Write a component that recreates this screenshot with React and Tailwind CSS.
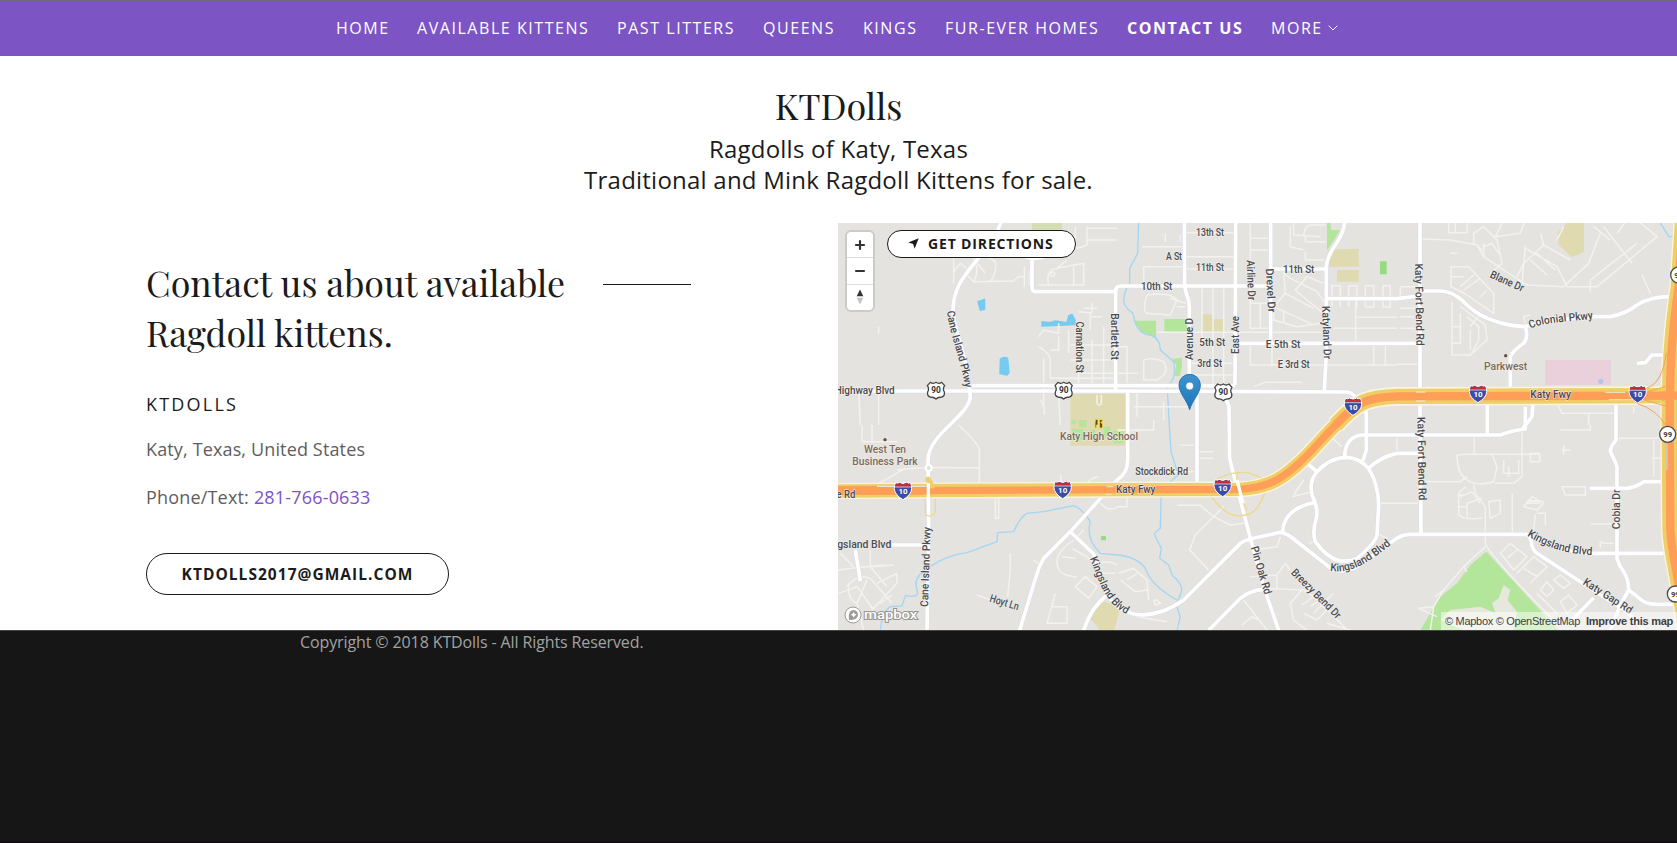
import React from "react";

const NAV = [
  ["HOME", "w-[81px]"],
  ["AVAILABLE KITTENS", "w-[200px]"],
  ["PAST LITTERS", "w-[146px]"],
  ["QUEENS", "w-[100px]"],
  ["KINGS", "w-[82px]"],
  ["FUR-EVER HOMES", "w-[182px]"],
  ["CONTACT US", "w-[144px] font-bold"],
];

/* Map units are thirds of a pixel. */
const MAJOR = [
  "M495 0 L470 60 L420 120 C370 180 350 210 348 270 C350 330 385 400 393 470 L400 530 C395 590 275 640 273 720 L275 920 L270 1231",
  "M405 497 H1195", "M0 513 H835 L1530 516 Q1555 520 1568 550 Q1588 560 1588 590 V690 L1578 722",
  "M1568 550 L1588 580",
  "M585 110 V205 Q586 215 598 215 H835 Q836 198 850 198 H1290", "M836 205 V512",
  "M1042 0 L1043 190 Q1043 210 1053 235 Q1058 250 1057 280 V490", "M1080 516 V790",
  "M1196 0 L1194 495", "M1301 0 V370", "M1301 147 H1470", "M1523 0 Q1523 35 1495 75 Q1470 110 1468 140 V400 L1462 512",
  "M1200 370 H1680 H1740", "M1472 236 H1680 L1745 228",
  "M872 516 V720 Q872 760 840 780 L700 935 L620 1015 Q605 1040 597 1070 L548 1231",
  "M700 935 L770 1002 Q785 1050 810 1125 Q840 1170 890 1182 Q960 1195 1040 1140 L1210 970 Q1225 960 1240 957 L1330 937 Q1350 940 1370 957 L1475 1040 Q1510 1065 1560 1040 L1680 955 Q1695 944 1720 943 H2065 Q2080 945 2083 965 Q2085 990 2100 1000 L2230 1085 L2370 1175 L2420 1231",
  "M810 1125 Q760 1165 740 1231",
  "M2065 943 L2130 965 Q2200 1000 2260 1000 H2480",
  "M1160 516 L1176 560 L1178 715 L1185 745 L1240 955 L1285 1115 L1325 1231",
  "M1115 1231 L1210 1135 Q1240 1110 1280 1108",
  "M1440 755 Q1480 712 1530 712 Q1570 715 1595 745 Q1625 795 1625 855 L1620 945 Q1615 970 1560 1015 Q1540 1025 1510 1023 Q1470 1015 1435 965 Q1425 935 1438 895 Q1445 865 1425 825 Q1415 785 1440 755",
  "M1412 732 L1440 755", "M1435 847 Q1340 865 1337 937", "M1523 712 Q1523 655 1570 645 H1990 Q2030 630 2065 627 V560",
  "M1595 745 Q1630 710 1680 700 H1745", "M1951 550 V643", "M2088 550 L2085 590 L2058 625",
  "M2337 555 V660 Q2320 680 2320 695 Q2335 725 2340 740 V1015 Q2345 1035 2360 1055 Q2375 1080 2375 1110 L2350 1155 L2320 1231",
  "M2375 1110 L2420 1145 Q2435 1153 2460 1153 H2520", "M2258 805 H2370 Q2400 800 2420 785 H2480",
  "M1749 0 V600 L1752 940", "M1750 213 H1810 Q1845 213 1880 245 Q1940 310 2060 320 L2160 300 L2270 290 H2320 Q2370 280 2400 255 Q2440 230 2500 230",
  "M2065 320 Q2075 350 2060 370 Q2025 395 2020 410 V500", "M2400 430 L2425 428 L2445 405 H2490",
  "M165 975 H265", "M55 990 L70 1083", "M2270 1133 L2200 1205",
];

const MINOR = [
  /* north-west */
  "M350 80 V190 M350 155 L370 130 L395 150 M385 160 L410 185 Q430 150 410 120 Q440 100 475 125 Q480 160 460 185 M410 115 L445 160 M410 185 L530 183 Q545 165 560 170 M562 140 V200 M577 150 V195 M635 195 Q625 150 660 145 L740 130 V195 H605 M655 160 Q645 150 640 165 Q650 175 655 160 M660 145 L690 120 M710 140 V195",
  "M715 20 V80 H690 M750 20 V75 Q720 90 700 80 M750 25 H840 M750 60 H840",
  "M725 275 L760 278 V330 M765 250 V280 M780 265 H740 M760 290 H795 M605 350 L620 330 L665 340 V310 M605 380 Q640 400 640 420 V475 H835 M620 415 V560 M610 540 Q625 560 622 585 M665 350 V390 H640 M695 330 V400 M725 410 V490 M765 360 V490 M800 320 V490 M700 375 H835 M700 420 H835 M730 460 H835",
  "M65 520 L70 615 M125 520 V615 M125 320 V340 M665 530 L670 615 M780 525 V550 Q787 560 793 550 V525",
  "M75 615 V665 H180 M105 665 V615 M365 615 Q410 655 427 685 V795 M180 750 Q240 740 350 743 H427 M0 793 H120 Q160 770 200 748 M475 835 V895 H485 V835 M520 1000 V1050 L512 1130 M672 790 V765 M750 790 Q765 770 785 770",
  "M0 1050 L45 1045 L140 1035 M50 1040 L10 1000 M100 990 V1040 L170 1035 M100 1040 L150 1100 M120 1090 L180 1060 M30 1100 Q60 1060 100 1075 L165 1150 M5 1120 L60 1100 L110 1170 M180 1060 V1090 L110 1165 M35 1090 Q30 1140 60 1150 M90 1080 L60 1150 L80 1231 M130 1150 L165 1125",
  "M420 1125 L460 1140 M590 1020 L610 1035 M710 960 Q650 1000 662 1040 Q670 1070 720 1070 M740 930 L720 950 M675 1010 L715 1015 M705 985 Q730 1000 750 1010 L770 1030 M715 1100 L745 1070 L780 1100 L755 1135 Z M785 1030 Q820 1020 840 1035 M780 1060 L835 1060 M655 1120 L630 1210 H690 V1160 H645 M790 850 Q820 880 840 860",
  /* town centre */
  "M915 80 H1040 M985 65 V40 M1030 65 V45 M920 140 H1040 M1190 38 H1050 M1190 110 H1050 M1190 147 H1050 M920 140 V190 M1240 0 V325 H1300 M1270 250 V325 M1240 55 H1300 M1240 90 H1300 M1240 250 H1300 M1095 200 V370 M1128 200 V490 M1160 200 V490 M960 337 H1460 M1050 465 H1190 M1050 430 H1190 M1240 370 V435 H1680 M1305 375 V435",
  "M930 225 Q915 270 930 280 L1000 285 L1020 240 Q1000 215 930 225 M1000 235 L1045 250 M1020 260 H1045 M920 420 Q950 410 980 425 Q1000 460 960 480 H920 Z M840 380 H870 V490 M840 460 H905",
  "M1360 20 V80 L1400 90 M1370 0 V45 L1450 50 M1400 50 Q1400 20 1420 15 H1465 M1405 45 V65 H1465 M1405 95 V120 H1460 M1340 155 L1345 220 L1310 260 V300 L1380 320 L1450 310 M1360 175 L1440 215 L1465 250 M1375 210 L1410 170 L1460 190 M1375 210 L1410 240 L1460 280 M1345 220 L1430 265 M1310 260 L1420 310 M1340 270 V310 M1360 175 L1340 160",
  "M1485 260 V197 H1510 V262 M1535 260 V197 H1560 V262 M1585 260 V197 H1610 V262 Z M1638 260 V197 H1660 V262 Z M1556 240 V362 M1560 292 H1680 M1490 325 H1680 M1610 375 V435 M1645 375 V435 M1250 500 L1285 487 H1395",
  "M1030 676 H1070 M1085 695 H1130 M1085 715 H1130 M900 590 V515 M980 600 V545 M890 560 H1060 M840 630 H950 V600 M980 755 H1070 M840 860 H870 V835",
  "M1020 856 H1090 L1130 890 L1180 915 L1220 910 M1130 890 L1160 860 M1130 890 L1075 945 L1058 990 L1115 1050 M1105 870 L1125 885 M1365 830 L1425 815 M1370 825 L1400 780 M1480 650 L1515 680 M1630 850 H1680 M1620 940 L1650 955 M1415 970 Q1430 965 1430 965 M1250 990 L1320 980 L1330 950",
  "M845 1060 L890 1045 L930 1080 L935 1140 M850 1080 L895 1115 L930 1110 M870 1080 L900 1060 M950 1140 L955 1155 L970 1150 L960 1140 Z M840 1160 L900 1190 L990 1205 M1240 1070 L1320 1065 L1345 1030 L1360 1050 M1290 1105 L1400 1110 Q1440 1130 1530 1231 M1395 1110 L1360 1150 L1370 1200 L1410 1231 M1395 1155 L1430 1130 L1470 1170 L1440 1200 L1400 1180 M1420 1160 L1450 1140 M1430 1180 L1490 1120 M1220 1140 L1290 1231 M1215 1215 L1245 1190 L1265 1200 M1470 1210 L1540 1231 M1320 1065 V1110",
  /* north-east */
  "M1755 57 L1840 60 L1920 75 L1935 90 M1835 0 V38 H1890 V0 M1855 0 V38 M1910 75 V40 L1940 20 L1980 60 L1995 130 L1960 160 M1920 75 L1940 110 L2000 150 L2070 195 L2180 200 L2255 130 L2290 40 M1940 80 L1965 70 L1985 100 M1940 110 V70 M1840 100 H1860 M1975 50 L2050 40 L2065 0 M2000 0 L1975 50 M2065 75 L2055 195 M2040 170 L2060 130 L2120 75 L2110 40 M2065 85 L2160 140 L2190 200 H2280 L2460 50 L2400 0 M2120 75 L2200 120 M2095 95 L2155 150 M2080 120 L2130 165 M2260 215 V180 L2400 70 M2300 20 L2385 130 M2320 60 L2270 20 M2340 40 L2370 0 M2415 165 L2440 220 M2160 60 L2180 20",
  "M1842 140 H1895 L1970 220 V280 L1890 225 L1842 200 Z M1842 170 H1880 M1870 200 L1910 165 M1880 210 L1930 175 M1930 230 L1950 210 M1845 245 V405 H1900 L1950 360 L1945 315 L1870 260 M1870 280 V370 H1845 M1890 290 L1925 320 V360 L1905 400 M1845 320 H1870 M1900 330 V390 M1930 280 L1900 320 M1690 200 H1735 M1690 265 H1735 M1690 290 H1735 M1690 325 H1735 M1680 433 H1740 M1690 200 V230",
  "M2065 310 L2060 290 L2080 285",
  /* south-east */
  "M1860 705 L1885 703 H1965 L1980 740 L1970 785 Q1920 800 1890 780 Q1860 760 1860 705 M1965 703 H2108 M2055 620 V770 L2030 790 H1975 M2000 720 V760 H2045 V720 M2015 740 V770 M2080 700 V725 H2108 V700 Z M1912 650 V703 M1765 785 H1870 L1890 770 M1680 850 H1745 M1680 655 V690",
  "M1910 795 L1915 820 L1945 860 V970 Q1960 1010 2140 1190 M1885 800 L1865 820 V885 Q1880 900 1935 895 M1865 825 H1885 M1870 830 L1905 815 L1930 850 M1865 860 H1890 M1890 890 V850 L1935 835 M1955 845 L1990 840 V880 L1960 895 Z M2026 820 V935 M2060 860 L2085 830 L2120 850 L2100 870 L2060 860 M2070 850 H2110 M2095 885 L2090 930 M2100 880 H2125 V915 M2070 840 L2120 845 M2175 800 H2245 V825 H2185 Z M2175 690 H2200 M2180 675 V705 M2170 630 H2260 V615 M2345 655 H2480 M2445 715 H2480 M2450 660 V770 M2262 912 H2340 M2290 985 V965 L2300 970 H2330",
  "M1990 1000 L2020 970 L2070 1010 L2030 1050 Z M2010 1015 L2040 990 M2040 1060 L2090 1010 L2130 1040 L2080 1090 M2060 1045 L2100 1070 M2110 1110 L2130 1085 L2150 1110 L2130 1130 Z M2150 1080 L2170 1065 L2200 1090 L2180 1105 Z M2170 1145 L2195 1125 L2220 1155 L2190 1180 Z M2100 1120 L2160 1180",
  "M1945 980 L1880 1040 L1820 1110 L1790 1160 L1745 1165 M1880 1040 L1890 1055 M1790 1160 L1780 1231 M1745 1165 L1800 1190 M1820 1110 L1795 1130",
  "M2160 550 L2175 580 H2345 M2255 580 V615 M2390 560 V580",
];

const WATER = [
  "M905 0 L902 100 L878 145 V190 Q860 215 860 245 Q865 265 888 280 L895 310 Q910 345 940 345 Q970 355 970 390 L1010 425 Q1018 470 1000 490 Q988 500 992 525 L997 615 L1002 695 Q1015 735 1023 765 L990 795 L973 805 L970 925 Q950 940 953 945 L973 985 L968 1015 L995 1035 L1005 1065 Q1040 1095 1033 1115 L1018 1155 L1030 1190 L1020 1231",
  "M130 1231 Q135 1175 160 1160 L195 1158 L205 1127 Q250 1135 240 1110 Q225 1070 280 1040 Q330 1005 390 998 L480 965 L482 938 L530 935 Q550 890 570 880 L620 875 L710 857 Q735 865 760 905 Q745 955 790 1000 L840 1005 Q900 1010 925 1045 Q940 1095 1020 1140",
  "M2465 0 L2495 50 H2520",
];

const TEXTS = [
  ["13th St", 1119, 48, 84], ["A St", 1011, 120, 48], ["11th St", 1119, 152, 84], ["10th St", 959, 209, 94],
  ["11th St", 1385, 158, 94], ["5th St", 1126, 378, 78], ["E 5th St", 1338, 383, 104], ["3rd St", 1118, 442, 74],
  ["E 3rd St", 1370, 445, 96], ["Highway Blvd", 83, 522, 180], ["Katy Fwy", 2141, 535, 122], ["Katy Fwy", 896, 820, 118],
  ["Stockdick Rd", 974, 764, 158], ["ngsland Blvd", 73, 985, 180], ["le Rd", 23, 834, 64],
  ["Carnation St", 718, 382, 155, 90], ["Bartlett St", 823, 350, 140, 90], ["Airline Dr", 1231, 181, 120, 88],
  ["Drexel Dr", 1290, 212, 132, 87], ["Katyland Dr", 1458, 338, 160, 88], ["Avenue D", 1068, 357, 126, -90],
  ["East Ave", 1206, 345, 114, -90], ["Katy Fort Bend Rd", 1736, 254, 246, 89], ["Katy Fort Bend Rd", 1743, 716, 250, 89],
  ["Cobia Dr", 2350, 868, 120, -90], ["Cane Island Pkwy", 277, 1041, 240, -88],
  ["Blane Dr", 2006, 194, 108, 24], ["Hoyt Ln", 499, 1158, 90, 17], ["Pin Oak Rd", 1262, 1054, 148, 74],
  ["Breezy Bend Dr", 1430, 1129, 196, 45],
];

const POI = [["Parkwest", 2006, 450, 130], ["West Ten", 144, 699, 126], ["Business Park", 144, 735, 196], ["Katy High School", 786, 660, 234]];

const CURVED = [
  ["cane", "M330 274 C336 340 373 420 384 505", "Cane Island Pkwy", 236],
  ["colonial", "M2080 326 C2130 303 2200 306 2270 296", "Colonial Pkwy", 192],
  ["kings-a", "M758 1016 C785 1075 800 1155 880 1188", "Kingsland Blvd", 205],
  ["kings-b", "M1479 1052 C1540 1064 1600 1026 1668 968", "Kingsland Blvd", 206],
  ["kings-c", "M2070 947 C2130 983 2190 1003 2272 1006", "Kingsland Blvd", 206],
  ["gap", "M2236 1092 L2381 1184", "Katy Gap Rd", 168],
];

const FREEWAY_W = "M0 813 L840 809 L1210 808 C1290 803 1330 780 1380 735 C1420 700 1460 650 1496 615 C1560 545 1590 532 1680 530";
const FREEWAY_E = "M1496 615 C1560 545 1590 532 1680 529 L2520 527";
const GRAND_PKWY = "M2538 0 L2525 200 C2503 350 2498 450 2498 615 L2500 930 C2505 1020 2530 1080 2545 1231";

function Interstate({ x, y }) {
  return (
    <g transform={`translate(${x} ${y})`}>
      <path d="M-22-23 Q-16-19-11-24 Q0-17 11-24 Q16-19 22-23 Q31-4 20 11 Q12 22 0 28 Q-12 22-20 11 Q-31-4-22-23Z" fill="#3c4ba3" stroke="#fff" strokeWidth="3" />
      <path d="M-21-21 Q-16-17-11-22 Q0-15 11-22 Q16-17 21-21 L24-11 H-24Z" fill="#c62c38" />
      <path d="M-25-10 H25" stroke="#fff" strokeWidth="2" />
      <text y="11" textAnchor="middle" fill="#fff" fontSize="24" fontWeight="700">10</text>
    </g>
  );
}

function UsShield({ x, y }) {
  return (
    <g transform={`translate(${x} ${y})`}>
      <path d="M-17-24 Q-8-18 0-24 Q8-18 17-24 L26-14 Q19-5 25 5 Q28 18 14 21 Q6 20 0 26 Q-6 20-14 21 Q-28 18-25 5 Q-19-5-26-14Z" fill="#fff" stroke="#444" strokeWidth="4" strokeLinejoin="round" />
      <text y="9" textAnchor="middle" fill="#333" fontSize="25" fontWeight="700">90</text>
    </g>
  );
}

function StateShield({ x, y }) {
  return (
    <g transform={`translate(${x} ${y})`}>
      <circle r="24" fill="#fff" stroke="#4a4a4a" strokeWidth="4" />
      <text y="8" textAnchor="middle" fill="#333" fontSize="23" fontWeight="700">99</text>
    </g>
  );
}

function MapDrawing() {
  return (
    <svg viewBox="3 9 2517 1221" preserveAspectRatio="none" className="block h-[407px] w-[839px] bg-[#e4e3df] font-['Roboto',sans-serif]">
      <g fill="#dfdab0">
        <path d="M700 522 H872 V677 H700Z" /><path d="M1094 283 H1125 V297 H1160 V337 H1094Z" />
        <path d="M1475 87 H1565 V140 H1475Z M1500 150 H1565 V185 H1500Z" /><path d="M2162 38 L2190 9 H2241 V95 L2205 112 L2165 75Z" />
        <path d="M755 1190 L800 1145 L850 1160 L832 1231 H790Z" />
      </g>
      <g fill="#b3e59b">
        <path d="M585 9 H674 V35 H585Z" fill="#d3deb2" />
        <path d="M892 302 H957 V352 L935 345 Q905 335 892 302Z M982 297 H1050 V335 H982Z M1005 417 L1035 413 V440 L1028 468 H1012 L1018 435Z M1470 9 H1480 L1483 30 H1510 L1470 92Z" />
        <path d="M1629 124 H1649 V163 H1629Z M792 948 H807 V961 H792Z" fill="#98dc82" />
        <path d="M1948 995 L2165 1231 H1750 L1780 1180 L1810 1130 L1860 1090 L1900 1035Z" />
        <path d="M703 600 H716 V613 H703Z M726 600 H748 V622 H726Z M705 627 H740 V660 H705Z M755 630 H775 V650 H755Z M800 620 H820 V650 H800Z M830 632 H860 V670 H830Z" />
      </g>
      <path d="M2000 1095 L2020 1110 L2012 1140 L2040 1175 L2030 1231 H1880 L1810 1200 L1840 1170 L1930 1160 L1975 1178 L1965 1150 L1985 1135Z" fill="#e6e8dc" />
      <path d="M2124 420 H2322 V495 H2124Z" fill="#ead0da" />
      <circle cx="2291" cy="484" r="8" fill="#b5c5e2" />
      <path d="M423 245 L443 238 V268 L430 271 Z M490 418 Q500 408 512 415 L516 458 L510 465 L489 461Z M615 305 L640 308 L655 303 L690 308 L695 287 L705 283 L714 300 V314 L615 318Z" fill="#75cbf0" stroke="#75cbf0" strokeWidth="4" strokeLinejoin="round" />
      <g fill="none" stroke="#a3d6f3" strokeWidth="4" strokeLinejoin="round">{WATER.map((d) => <path key={d} d={d} />)}</g>
      <g fill="none" stroke="#f3f2ef" strokeWidth="4.5" strokeLinejoin="round">{MINOR.map((d) => <path key={d} d={d} />)}</g>
      <g fill="none" stroke="#d9dce8" strokeWidth="14" strokeLinejoin="round">{MAJOR.map((d) => <path key={d} d={d} />)}</g>
      <g fill="none" stroke="#ffffff" strokeWidth="11" strokeLinejoin="round">{MAJOR.map((d) => <path key={d} d={d} />)}</g>
      <path d="M560 112 Q585 130 632 112Z" fill="#fff" />
      <g fill="none" stroke="#f0d889" strokeWidth="4">
        <path d="M1115 818 Q1160 885 1200 887 Q1250 890 1268 850 L1292 805 M1140 778 Q1190 750 1240 760 L1290 780 M1202 760 Q1190 800 1230 870 M265 835 V880 Q267 888 280 888 Q295 885 295 870 V835" />
      </g>
      <g fill="none">
        <path d={FREEWAY_E} stroke="#fbf5df" strokeWidth="56" /><path d={FREEWAY_W} stroke="#fbf5df" strokeWidth="48" />
        <path d={GRAND_PKWY} stroke="#fbf5df" strokeWidth="56" />
        <path d={FREEWAY_W} stroke="#efce68" strokeWidth="40" /><path d={FREEWAY_E} stroke="#efce68" strokeWidth="46" />
        <path d={GRAND_PKWY} stroke="#efce68" strokeWidth="48" />
        <path d={FREEWAY_W} stroke="#ff9e56" strokeWidth="22" /><path d={FREEWAY_E} stroke="#ff9e56" strokeWidth="25" />
        <path d="M0 811 H262" stroke="#ff9e56" strokeWidth="26" />
        <path d="M120 799 H265" stroke="#e4e3df" strokeWidth="4" />
        <path d="M273 778 L285 798" stroke="#efce68" strokeWidth="16" strokeLinecap="round" />
        <path d={GRAND_PKWY} stroke="#ff9e56" strokeWidth="25" />
        <path d="M2430 504 Q2475 490 2488 400 M2400 550 Q2460 570 2485 615 M2390 527 L2485 500 M2390 530 L2485 558 M2440 515 L2485 545 M2440 540 L2485 512" stroke="#f4a25c" strokeWidth="3" />
        <path d="M2305 517 H2365 M2315 539 H2400 M1737 516 H1765 M1737 543 H1765 M808 800 H830 M805 823 H825" stroke="#ecdfb8" strokeWidth="4" />
        <path d="M2488 670 V750" stroke="#d9c6a6" strokeWidth="8" />
        <path d="M274 790 V850 M1200 780 L1218 850" stroke="#fff" strokeWidth="10" />
      </g>
      <circle cx="275" cy="744" r="9" fill="#e0e2ea" stroke="#fff" strokeWidth="6" />
      <g fill="#4a4b50" stroke="#f3f2ef" strokeOpacity="0.8" strokeWidth="4" strokeLinejoin="round" fontSize="33" fontWeight="500" textAnchor="middle" className="[paint-order:stroke]">
        {TEXTS.map(([t, x, y, w, r], i) => (
          <text key={i} x={x} y={y} textLength={w} lengthAdjust="spacingAndGlyphs" transform={r ? `rotate(${r} ${x} ${y})` : undefined}>{t}</text>
        ))}
      </g>
      <g fill="#4a4b50" stroke="#f3f2ef" strokeOpacity="0.8" strokeWidth="4" strokeLinejoin="round" fontSize="33" fontWeight="500" className="[paint-order:stroke]">
        {CURVED.map(([id, d, t, w]) => (
          <g key={id}>
            <path id={id} d={d} fill="none" stroke="none" />
            <text textLength={w} lengthAdjust="spacingAndGlyphs"><textPath href={`#${id}`} textLength={w} lengthAdjust="spacingAndGlyphs">{t}</textPath></text>
          </g>
        ))}
      </g>
      <g fill="#80695a" stroke="#f0efeb" strokeOpacity="0.8" strokeWidth="4" fontSize="33" fontWeight="500" textAnchor="middle" className="[paint-order:stroke]">
        {POI.map(([t, x, y, w]) => <text key={t} x={x} y={y} textLength={w} lengthAdjust="spacingAndGlyphs">{t}</text>)}
      </g>
      <circle cx="2006" cy="407" r="5" fill="#6b4c3c" /><circle cx="144" cy="659" r="5" fill="#6b4c3c" />
      <path d="M775 598 H783 V615 H779 V624 H774 V608Z M787 599 H797 V606 H792 V609 H797 V624 H787Z" fill="#5d4a1e" stroke="#f3dc42" strokeWidth="3" />
      {[[297, 511], [680, 511], [1159, 516]].map(([x, y]) => <UsShield key={x} x={x} y={y} />)}
      {[[198, 811], [677, 808], [1157, 802], [1548, 558], [1923, 520], [2402, 521]].map(([x, y]) => <Interstate key={x} x={x} y={y} />)}
      {[[2525, 165], [2492, 643], [2515, 1122]].map(([x, y]) => <StateShield key={y} x={x} y={y} />)}
      <defs>
        <linearGradient id="pin" x1="0" y1="0" x2="0" y2="1"><stop offset="0" stopColor="#3f94ce" /><stop offset="1" stopColor="#1b75bd" /></linearGradient>
      </defs>
      <path d="M1058 569 C1050 540 1026 520 1026 495 A32 32 0 0 1 1090 495 C1090 520 1066 540 1058 569Z" fill="url(#pin)" stroke="#2b76ae" strokeWidth="3" />
      <circle cx="1058" cy="498" r="12" fill="#fff" stroke="#2b76ae" strokeWidth="2" />
      <g>
        <circle cx="48" cy="1185" r="24" fill="#fff" stroke="#9b9a97" strokeWidth="3" />
        <path d="M36 1200 Q32 1171 49 1170 Q63 1172 63 1185 Q61 1201 36 1200Z" fill="#9b9a97" />
        <path d="M50 1175 L53 1181 L59 1184 L53 1187 L50 1193 L47 1187 L41 1184 L47 1181Z" fill="#fff" />
        <text x="81" y="1196" textLength="160" lengthAdjust="spacingAndGlyphs" fontSize="40" fontWeight="500" fill="#fff" stroke="#979693" strokeWidth="6" className="[paint-order:stroke]">mapbox</text>
      </g>
    </svg>
  );
}

function MapControls() {
  return (
    <div className="absolute left-[9px] top-[9px] flex h-[78px] w-[26px] flex-col divide-y divide-[#dddddd] rounded bg-white shadow-[0_0_0_2px_rgba(0,0,0,0.1)]">
      <button className="flex flex-1 items-center justify-center"><svg viewBox="0 0 12 12" className="h-3 w-3"><path d="M6 2 V10 M2 6 H10" stroke="#333" strokeWidth="2.2" strokeLinecap="round" /></svg></button>
      <button className="flex flex-1 items-center justify-center"><svg viewBox="0 0 12 12" className="h-3 w-3"><path d="M2 6 H10" stroke="#333" strokeWidth="2.2" strokeLinecap="round" /></svg></button>
      <button className="flex flex-1 items-center justify-center"><svg viewBox="0 0 8 16" className="h-4 w-2"><path d="M4 0.5 L7.3 7.3 H0.7Z" fill="#333" /><path d="M4 15.5 L7.3 8.7 H0.7Z" fill="#c4c4c4" /></svg></button>
    </div>
  );
}

export default function App() {
  return (
    <div className="flex h-[843px] w-[1677px] flex-col overflow-hidden bg-white font-['Open_Sans',sans-serif] text-[#1b1b1b]">
      <nav className="flex h-14 shrink-0 items-center whitespace-nowrap border-t border-[#6b6a78] bg-[#7c54c3] pb-px pl-[336px] text-[16px] tracking-[1.55px] text-white">
        {NAV.map(([label, cls]) => <a key={label} className={cls}>{label}</a>)}
        <a className="flex items-center gap-[5px]">MORE
          <svg viewBox="0 0 10 6" className="h-[6px] w-[10px]"><path d="M0.7 0.7 L5 5 L9.3 0.7" fill="none" stroke="#fff" strokeWidth="1" /></svg>
        </a>
      </nav>
      <header className="flex h-[167px] shrink-0 flex-col items-center pt-[24px] text-center">
        <h1 className="font-['Playfair_Display','Liberation_Serif',serif] text-[36px] leading-[50px] tracking-[-0.1px]">KTDolls</h1>
        <p className="mt-[3px] text-[24px] leading-[31px] tracking-[0.23px]">Ragdolls of Katy, Texas<br />Traditional and Mink Ragdoll Kittens for sale.</p>
      </header>
      <main className="flex h-[407px] shrink-0">
        <section className="w-[838px] pl-[146px] pt-[34px]">
          <div className="flex">
            <h2 className="w-[457px] whitespace-nowrap font-['Playfair_Display','Liberation_Serif',serif] text-[35.85px] leading-[50px]">Contact us about available<br />Ragdoll kittens.</h2>
            <div className="mt-[27px] h-px w-[88px] bg-[#1b1b1b]" />
          </div>
          <h4 className="mt-[35px] text-[18px] leading-[25px] tracking-[2.2px]">KTDOLLS</h4>
          <p className="mt-[17px] text-[18px] leading-[30px] tracking-[0.14px] text-[#5e5e5e]">Katy, Texas, United States</p>
          <p className="mt-[18px] text-[18px] leading-[30px] tracking-[0.18px] text-[#5e5e5e]">Phone/Text: <a className="text-[#7c54c3]">281-766-0633</a></p>
          <a className="mt-[41px] flex h-[42px] w-[303px] items-center justify-center rounded-full border border-[#1b1b1b] pt-[2px] text-[15.5px] font-bold tracking-[1.03px]">KTDOLLS2017@GMAIL.COM</a>
        </section>
        <section className="relative h-[407px] w-[839px] overflow-hidden">
          <MapDrawing />
          <MapControls />
          <a className="absolute left-[49px] top-[7px] flex h-7 w-[189px] items-center whitespace-nowrap rounded-full border border-[#1b1b1b] bg-white pb-px pl-[20px] text-[14px] font-bold tracking-[0.85px]">
            <svg viewBox="0 0 11 11" className="mr-[9px] h-[11px] w-[11px] shrink-0"><path d="M10.7 0.3 L6.6 10.7 L5.1 6 L0.3 4.4Z" fill="#1b1b1b" /></svg>
            GET DIRECTIONS
          </a>
          <div className="absolute bottom-0 right-0 flex h-[18px] w-[236px] items-center justify-between whitespace-nowrap bg-white/50 pl-[4px] pr-[4px] font-['Liberation_Sans',sans-serif] text-[11px] text-[#404040]">
            <span className="tracking-[-0.3px]">© Mapbox © OpenStreetMap</span><span className="font-bold tracking-[-0.25px]">Improve this map</span>
          </div>
        </section>
      </main>
      <footer className="flex-1 border-b border-t border-b-[#0b0609] border-t-[#454545] bg-[#161616] pl-[300px] text-[16px] leading-[22px] tracking-[-0.115px] text-[#a2a2a2]">Copyright © 2018 KTDolls - All Rights Reserved.</footer>
    </div>
  );
}
